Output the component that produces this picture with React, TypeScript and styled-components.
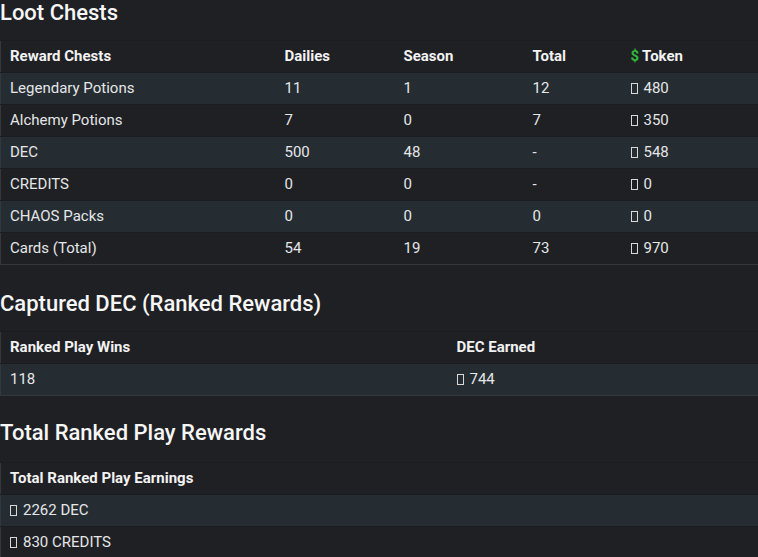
import React from "react";
import styled, { createGlobalStyle } from "styled-components";

const Global = createGlobalStyle`
  html, body {
    margin: 0;
    padding: 0;
    background: #1f2024;
    overflow: hidden;
  }
  body {
    font-family: Roboto, "Noto Sans", "Liberation Sans", sans-serif;
    color: #e4e6e8;
  }
`;

const Page = styled.div`
  width: 900px;
  display: flex;
  flex-direction: column;
`;

const Section = styled.section<{ $gap: number; $after: number }>`
  display: flex;
  flex-direction: column;
  gap: ${(p) => p.$gap}px;
  margin-bottom: ${(p) => p.$after}px;
`;

const Heading = styled.h2`
  margin: 0;
  font-size: 22px;
  font-weight: 500;
  line-height: 26px;
  color: #f6f6f6;
`;

const Table = styled.table`
  width: 100%;
  table-layout: fixed;
  border-collapse: collapse;
  border-top: 1px solid #3a3d42;
  border-left: 1px solid #34373c;
  border-bottom: 1px solid #34373c;
  font-size: 15px;
`;

const Row = styled.tr<{ $striped?: boolean }>`
  background: ${(p) => (p.$striped ? "#262d32" : "transparent")};
  border-top: 1px solid #1b1c1f;
`;

const Th = styled.th`
  text-align: left;
  font-weight: 700;
  color: #f2f2f2;
  padding: 7px 9px;
  line-height: 17px;
`;

const Td = styled.td`
  text-align: left;
  font-weight: 400;
  color: #e4e6e8;
  padding: 7px 9px;
  line-height: 17px;
  white-space: nowrap;
`;

const Tofu = styled.span`
  display: inline-block;
  width: 5px;
  height: 9px;
  border: 1px solid #d8d8d8;
  margin-right: 6px;
  vertical-align: -1px;
`;

const Dollar = styled.span`
  color: #2fb83a;
  font-weight: 700;
  margin-right: 3px;
`;

const Amount: React.FC<{ children: React.ReactNode }> = ({ children }) => (
  <>
    <Tofu />
    {children}
  </>
);

const loot = [
  ["Legendary Potions", "11", "1", "12", "480"],
  ["Alchemy Potions", "7", "0", "7", "350"],
  ["DEC", "500", "48", "-", "548"],
  ["CREDITS", "0", "0", "-", "0"],
  ["CHAOS Packs", "0", "0", "0", "0"],
  ["Cards (Total)", "54", "19", "73", "970"],
];

export default function App() {
  return (
    <Page>
      <Global />
      <Section $gap={14} $after={26}>
        <Heading>Loot Chests</Heading>
        <Table>
          <colgroup>
            <col style={{ width: 275 }} />
            <col style={{ width: 119 }} />
            <col style={{ width: 129 }} />
            <col style={{ width: 98 }} />
            <col />
          </colgroup>
          <thead>
            <Row>
              <Th>Reward Chests</Th>
              <Th>Dailies</Th>
              <Th>Season</Th>
              <Th>Total</Th>
              <Th>
                <Dollar>$</Dollar>Token
              </Th>
            </Row>
          </thead>
          <tbody>
            {loot.map((r, i) => (
              <Row key={r[0]} $striped={i % 2 === 0}>
                <Td>{r[0]}</Td>
                <Td>{r[1]}</Td>
                <Td>{r[2]}</Td>
                <Td>{r[3]}</Td>
                <Td>
                  <Amount>{r[4]}</Amount>
                </Td>
              </Row>
            ))}
          </tbody>
        </Table>
      </Section>

      <Section $gap={14} $after={24}>
        <Heading>Captured DEC (Ranked Rewards)</Heading>
        <Table>
          <colgroup>
            <col style={{ width: 447 }} />
            <col />
          </colgroup>
          <thead>
            <Row>
              <Th>Ranked Play Wins</Th>
              <Th>DEC Earned</Th>
            </Row>
          </thead>
          <tbody>
            <Row $striped>
              <Td>118</Td>
              <Td>
                <Amount>744</Amount>
              </Td>
            </Row>
          </tbody>
        </Table>
      </Section>

      <Section $gap={16} $after={0}>
        <Heading>Total Ranked Play Rewards</Heading>
        <Table>
          <thead>
            <Row>
              <Th>Total Ranked Play Earnings</Th>
            </Row>
          </thead>
          <tbody>
            <Row $striped>
              <Td>
                <Amount>2262 DEC</Amount>
              </Td>
            </Row>
            <Row>
              <Td>
                <Amount>830 CREDITS</Amount>
              </Td>
            </Row>
          </tbody>
        </Table>
      </Section>
    </Page>
  );
}
